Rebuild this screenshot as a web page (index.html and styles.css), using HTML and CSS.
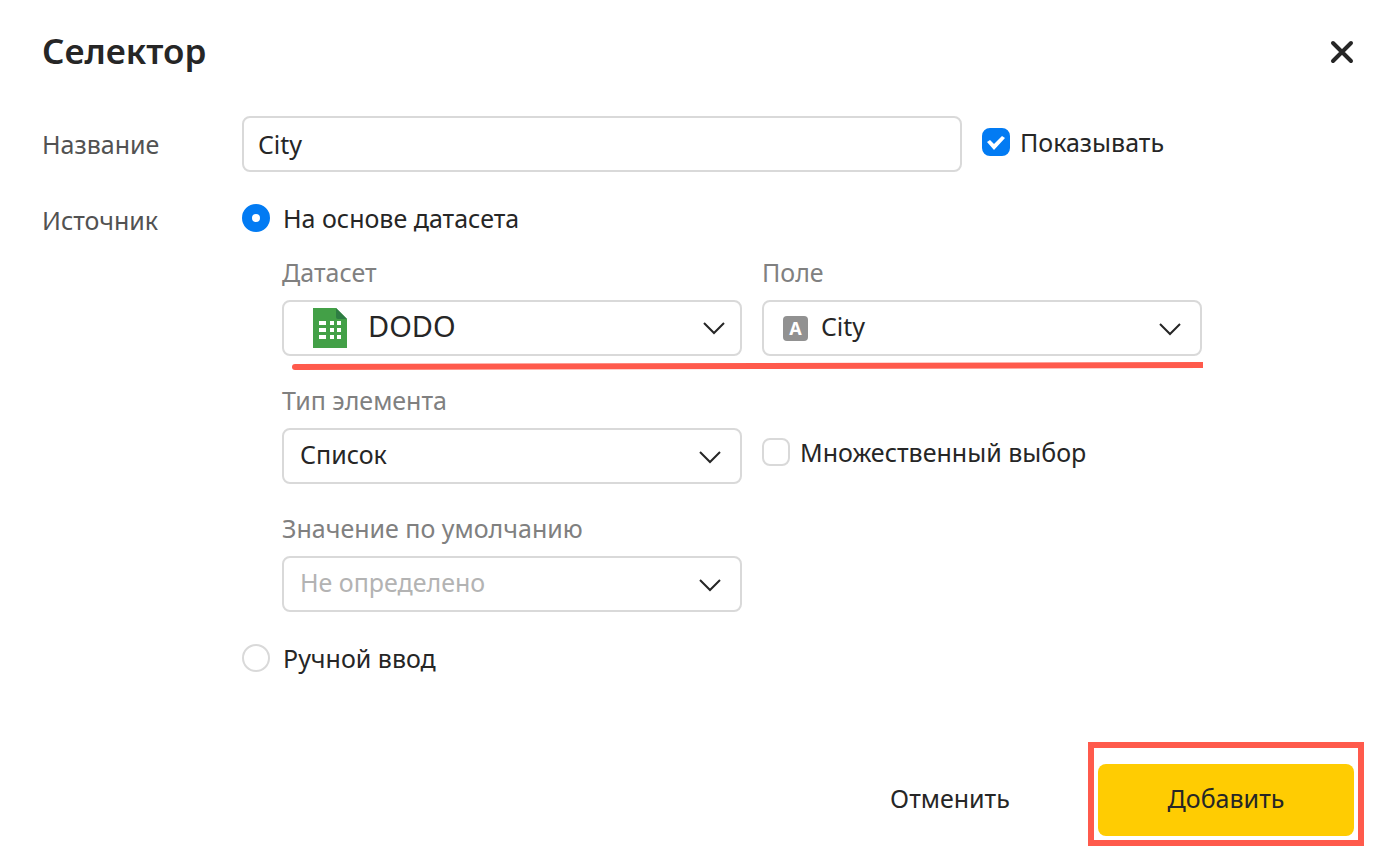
FILE: index.html
```html
<!DOCTYPE html>
<html lang="ru">
<head>
  <meta charset="UTF-8">
  <meta name="viewport" content="width=device-width, initial-scale=1.0">
  <title>Селектор</title>
  <link rel="stylesheet" href="styles.css">
</head>
<body>
  <form class="dialog">
    <header class="header">
      <h1>Селектор</h1>
      <button type="button" class="close" aria-label="Закрыть">
        <svg width="24" height="24" viewBox="0 0 24 24"><path d="M3 3l18 18M21 3l-18 18"/></svg>
      </button>
    </header>

    <div class="row">
      <label class="row-label" for="name">Название</label>
      <div class="row-content name-content">
        <input type="text" id="name" class="text-input" value="City">
        <label class="option"><input type="checkbox" checked>Показывать</label>
      </div>
    </div>

    <div class="row source-row">
      <span class="row-label">Источник</span>
      <div class="row-content">
        <label class="option radio-option"><input type="radio" name="source" checked>На основе датасета</label>

        <div class="fields">
          <div class="field">
            <label for="dataset">Датасет</label>
            <div class="select select-dataset">
              <svg class="sheet-icon" width="34" height="40" viewBox="0 0 34 40">
                <path fill="#43a047" d="M0 0h23l11 11v29H0z"/>
                <path fill="#2e7d43" d="M23 0l11 11H25q-2 0-2-2z"/>
                <path fill="#fff" d="M6 13h7v4H6zM17 13h4v4h-4zM24 13h4v4h-4zM6 20h7v4H6zM17 20h4v4h-4zM24 20h4v4h-4zM6 27h7v4H6zM17 27h4v4h-4zM24 27h4v4h-4z"/>
              </svg>
              <select id="dataset"><option>DODO</option></select>
              <svg class="arrow" width="24" height="16" viewBox="0 0 24 16"><path d="M2 3l10 10 10-10"/></svg>
            </div>
          </div>
          <div class="field">
            <label for="field">Поле</label>
            <div class="select select-field">
              <span class="type-icon">A</span>
              <select id="field"><option>City</option></select>
              <svg class="arrow" width="24" height="16" viewBox="0 0 24 16"><path d="M2 4l10 10 10-10"/></svg>
            </div>
          </div>
          <svg class="underline" viewBox="0 0 911 8" preserveAspectRatio="none"><path d="M3 5L911 3"/><circle cx="3" cy="5" r="3"/></svg>

          <div class="field">
            <label for="type">Тип элемента</label>
            <div class="select">
              <select id="type"><option>Список</option></select>
              <svg class="arrow" width="24" height="16" viewBox="0 0 24 16"><path d="M2 4l10 10 10-10"/></svg>
            </div>
          </div>
          <label class="option multiple"><input type="checkbox">Множественный выбор</label>

          <div class="field">
            <label for="default">Значение по умолчанию</label>
            <div class="select">
              <select id="default" class="empty"><option>Не определено</option></select>
              <svg class="arrow" width="24" height="16" viewBox="0 0 24 16"><path d="M2 4l10 10 10-10"/></svg>
            </div>
          </div>
        </div>

        <label class="option radio-option"><input type="radio" name="source">Ручной ввод</label>
      </div>
    </div>

    <footer class="footer">
      <button type="button" class="button">Отменить</button>
      <div class="highlight">
        <button type="submit" class="button button-action">Добавить</button>
      </div>
    </footer>
  </form>
</body>
</html>
```

FILE: styles.css
```css
* {
  box-sizing: border-box;
}
body {
  margin: 0;
  background: #fff;
  color: #262626;
  font-family: "Noto Sans", "Open Sans", sans-serif;
  font-size: 25px;
  line-height: 32px;
}
input, select, button {
  font: inherit;
  color: inherit;
}
.dialog {
  display: flex;
  flex-direction: column;
  min-height: 100vh;
  padding: 28px 26px 8px 42px;
}
.header {
  display: flex;
  justify-content: space-between;
  align-items: center;
  margin-bottom: 40px;
}
h1 {
  margin: 0;
  padding-bottom: 2px;
  font-size: 35px;
  line-height: 46px;
  font-weight: 600;
}
.close {
  display: flex;
  padding: 10px;
  border: none;
  background: none;
  cursor: pointer;
}
.close path {
  fill: none;
  stroke: #262626;
  stroke-width: 4;
  stroke-linecap: round;
}
.row {
  display: grid;
  grid-template-columns: 200px 1fr;
}
.row-label {
  color: #525252;
  padding-top: 12px;
}
.source-row {
  margin-top: 30px;
}
.source-row .row-label {
  padding-top: 2px;
}
.name-content {
  display: flex;
  align-items: center;
  gap: 20px;
}
.name-content .option {
  padding-bottom: 4px;
}
.text-input {
  flex: 1;
  min-width: 0;
  max-width: 720px;
  height: 56px;
  padding: 0 14px;
  border: 2px solid #d9d9d9;
  border-radius: 8px;
  background: #fff;
}
.option {
  display: flex;
  align-items: center;
  gap: 10px;
}
.radio-option {
  gap: 13px;
}
.option input {
  appearance: none;
  flex: none;
  width: 28px;
  height: 28px;
  margin: 0;
  border: 2px solid #d9d9d9;
  border-radius: 8px;
  background: #fff;
}
.option input[type="radio"] {
  border-radius: 50%;
}
.option input[type="radio"]:checked {
  border: 10px solid #027bf3;
}
.option input[type="checkbox"]:checked {
  display: grid;
  place-items: center;
  padding-top: 2px;
  border-color: #027bf3;
  background: #027bf3;
}
.option input[type="checkbox"]:checked::before {
  content: "";
  width: 18px;
  height: 14px;
  background: #fff;
  clip-path: polygon(0 6px, 3px 4px, 7px 8px, 15px 0, 18px 2px, 7px 14px);
}
.fields {
  position: relative;
  display: grid;
  grid-template-columns: minmax(0, 460px) minmax(0, 440px);
  gap: 28px 20px;
  margin: 22px 0 30px 40px;
}
.field {
  display: flex;
  flex-direction: column;
  gap: 12px;
  color: #808080;
}
.select {
  display: flex;
  align-items: center;
  height: 56px;
  padding: 0 18px 0 16px;
  border: 2px solid #d9d9d9;
  border-radius: 8px;
  color: #262626;
}
.select select {
  appearance: none;
  flex: 1;
  min-width: 0;
  height: 52px;
  padding: 0 0 4px;
  border: none;
  background: none;
}
.select .empty {
  color: #b3b3b3;
}
.select-dataset {
  gap: 21px;
  padding: 0 14px 0 29px;
}
.select-dataset select {
  font-size: 29px;
}
.select-field {
  gap: 13px;
  padding-left: 19px;
}
.sheet-icon {
  flex: none;
}
.type-icon {
  width: 25px;
  height: 25px;
  border-radius: 4px;
  background: #919191;
  color: #fff;
  font-size: 18px;
  line-height: 25px;
  font-weight: 700;
  text-align: center;
}
.arrow {
  flex: none;
}
.arrow path {
  fill: none;
  stroke: #262626;
  stroke-width: 2;
}
.underline {
  position: absolute;
  top: 106px;
  left: 10px;
  width: calc(100% - 10px);
  max-width: 911px;
  height: 8px;
}
.underline path {
  fill: none;
  stroke: #ff5a4c;
  stroke-width: 6;
}
.underline circle {
  fill: #ff5a4c;
}
.multiple {
  align-self: end;
  height: 56px;
  padding-bottom: 8px;
}
.footer {
  display: flex;
  justify-content: flex-end;
  align-items: flex-end;
  gap: 10px;
  margin-top: auto;
}
.button {
  width: 256px;
  height: 72px;
  padding: 0 0 4px;
  border: none;
  border-radius: 8px;
  background: none;
  cursor: pointer;
}
.footer > .button {
  margin-bottom: 10px;
}
.highlight {
  padding: 16px 4px 4px;
  border: 6px solid #ff5a4c;
}
.button-action {
  display: block;
  background: #ffcc02;
}
```
